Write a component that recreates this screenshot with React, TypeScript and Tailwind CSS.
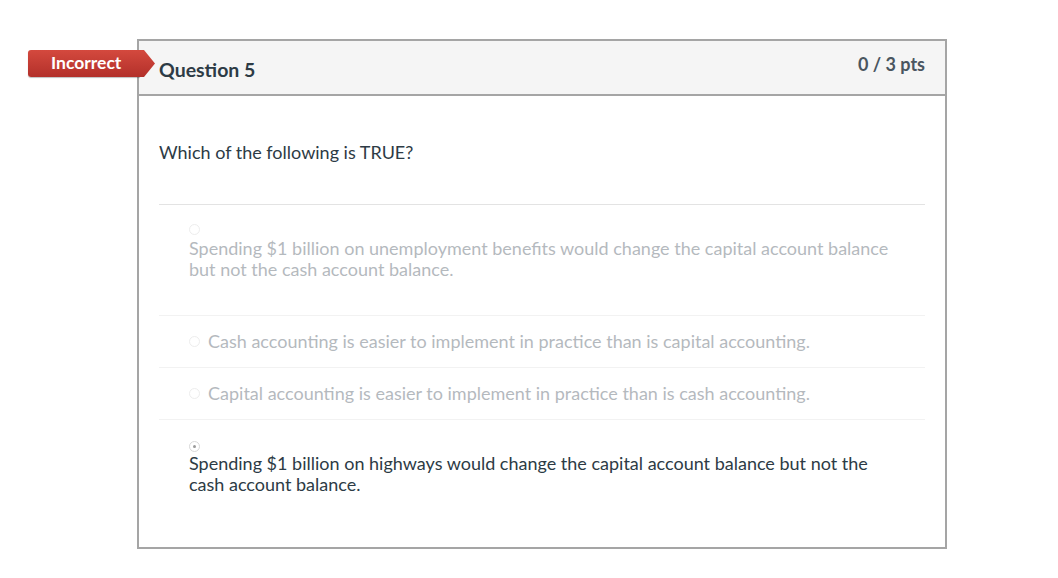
import React from "react";

function Radio({ checked }: { checked?: boolean }) {
  return (
    <span className="flex items-center justify-center w-[11px] h-[11px] rounded-full border border-[#d8d8d8] bg-white shrink-0">
      {checked && <span className="w-[3px] h-[3px] rounded-full bg-[#9a9a9a]" />}
    </span>
  );
}

export default function App() {
  return (
    <div className="w-[1058px] h-[578px] bg-white relative" style={{ fontFamily: "Lato, 'Open Sans', sans-serif" }}>
      <div className="pt-[39px] pl-[137px]">
        <div className="relative w-[810px] h-[510px] border-2 border-[#a5a5a5] flex flex-col">
          {/* badge */}
          <div className="absolute left-[-111px] top-[9px] h-[27px] flex items-stretch">
            <div className="w-[112px] rounded-l-[3px] bg-gradient-to-b from-[#d4493e] to-[#b3302a] text-white font-bold text-[17.5px] leading-[26px] pl-[23px] shadow-[0_1px_1px_rgba(0,0,0,0.25)]">
              Incorrect
            </div>
            <svg width="16" height="27" viewBox="0 0 16 27" className="block">
              <defs>
                <linearGradient id="g" x1="0" y1="0" x2="0" y2="1">
                  <stop offset="0" stopColor="#d4493e" />
                  <stop offset="1" stopColor="#b3302a" />
                </linearGradient>
              </defs>
              <path d="M0 0 L4 0 L15 13.5 L4 27 L0 27 Z" fill="url(#g)" />
            </svg>
          </div>
          <div className="h-[55px] bg-[#f5f5f5] border-b-2 border-[#a5a5a5] flex justify-between items-start pl-[20px] pr-[20px]">
            <div className="text-[19.5px] font-bold text-[#2d3b45] pt-[16px] leading-[26px]">Question 5</div>
            <div className="text-[18px] font-bold text-[#4a5660] pt-[11px] leading-[24px]">0 / 3 pts</div>
          </div>
          <div className="px-[20px] pt-[44px]">
            <div className="text-[18px] text-[#2d3b45] leading-[24px]">Which of the following is TRUE?</div>
            <div className="mt-[40px] border-t border-[#e3e3e3]" />
            <div className="pl-[30px] pt-[19px] pb-[35px] border-b border-[#e3e3e3] opacity-45">
              <Radio />
              <div className="text-[18px] text-[#5b6670] leading-[21px] mt-[3px] w-[720px]">
                Spending $1 billion on unemployment benefits would change the capital account balance but not the cash account balance.
              </div>
            </div>
            <div className="pl-[30px] h-[52px] flex items-center gap-[8px] border-b border-[#e3e3e3] opacity-45">
              <Radio />
              <span className="text-[18px] text-[#5b6670] leading-[21px]">Cash accounting is easier to implement in practice than is capital accounting.</span>
            </div>
            <div className="pl-[30px] h-[52px] flex items-center gap-[8px] border-b border-[#e3e3e3] opacity-45">
              <Radio />
              <span className="text-[18px] text-[#5b6670] leading-[21px]">Capital accounting is easier to implement in practice than is cash accounting.</span>
            </div>
            <div className="pl-[30px] pt-[21px]">
              <Radio checked />
              <div className="text-[18px] text-[#2d3b45] leading-[21px] mt-[1px] w-[700px]">
                Spending $1 billion on highways would change the capital account balance but not the cash account balance.
              </div>
            </div>
          </div>
        </div>
      </div>
    </div>
  );
}
